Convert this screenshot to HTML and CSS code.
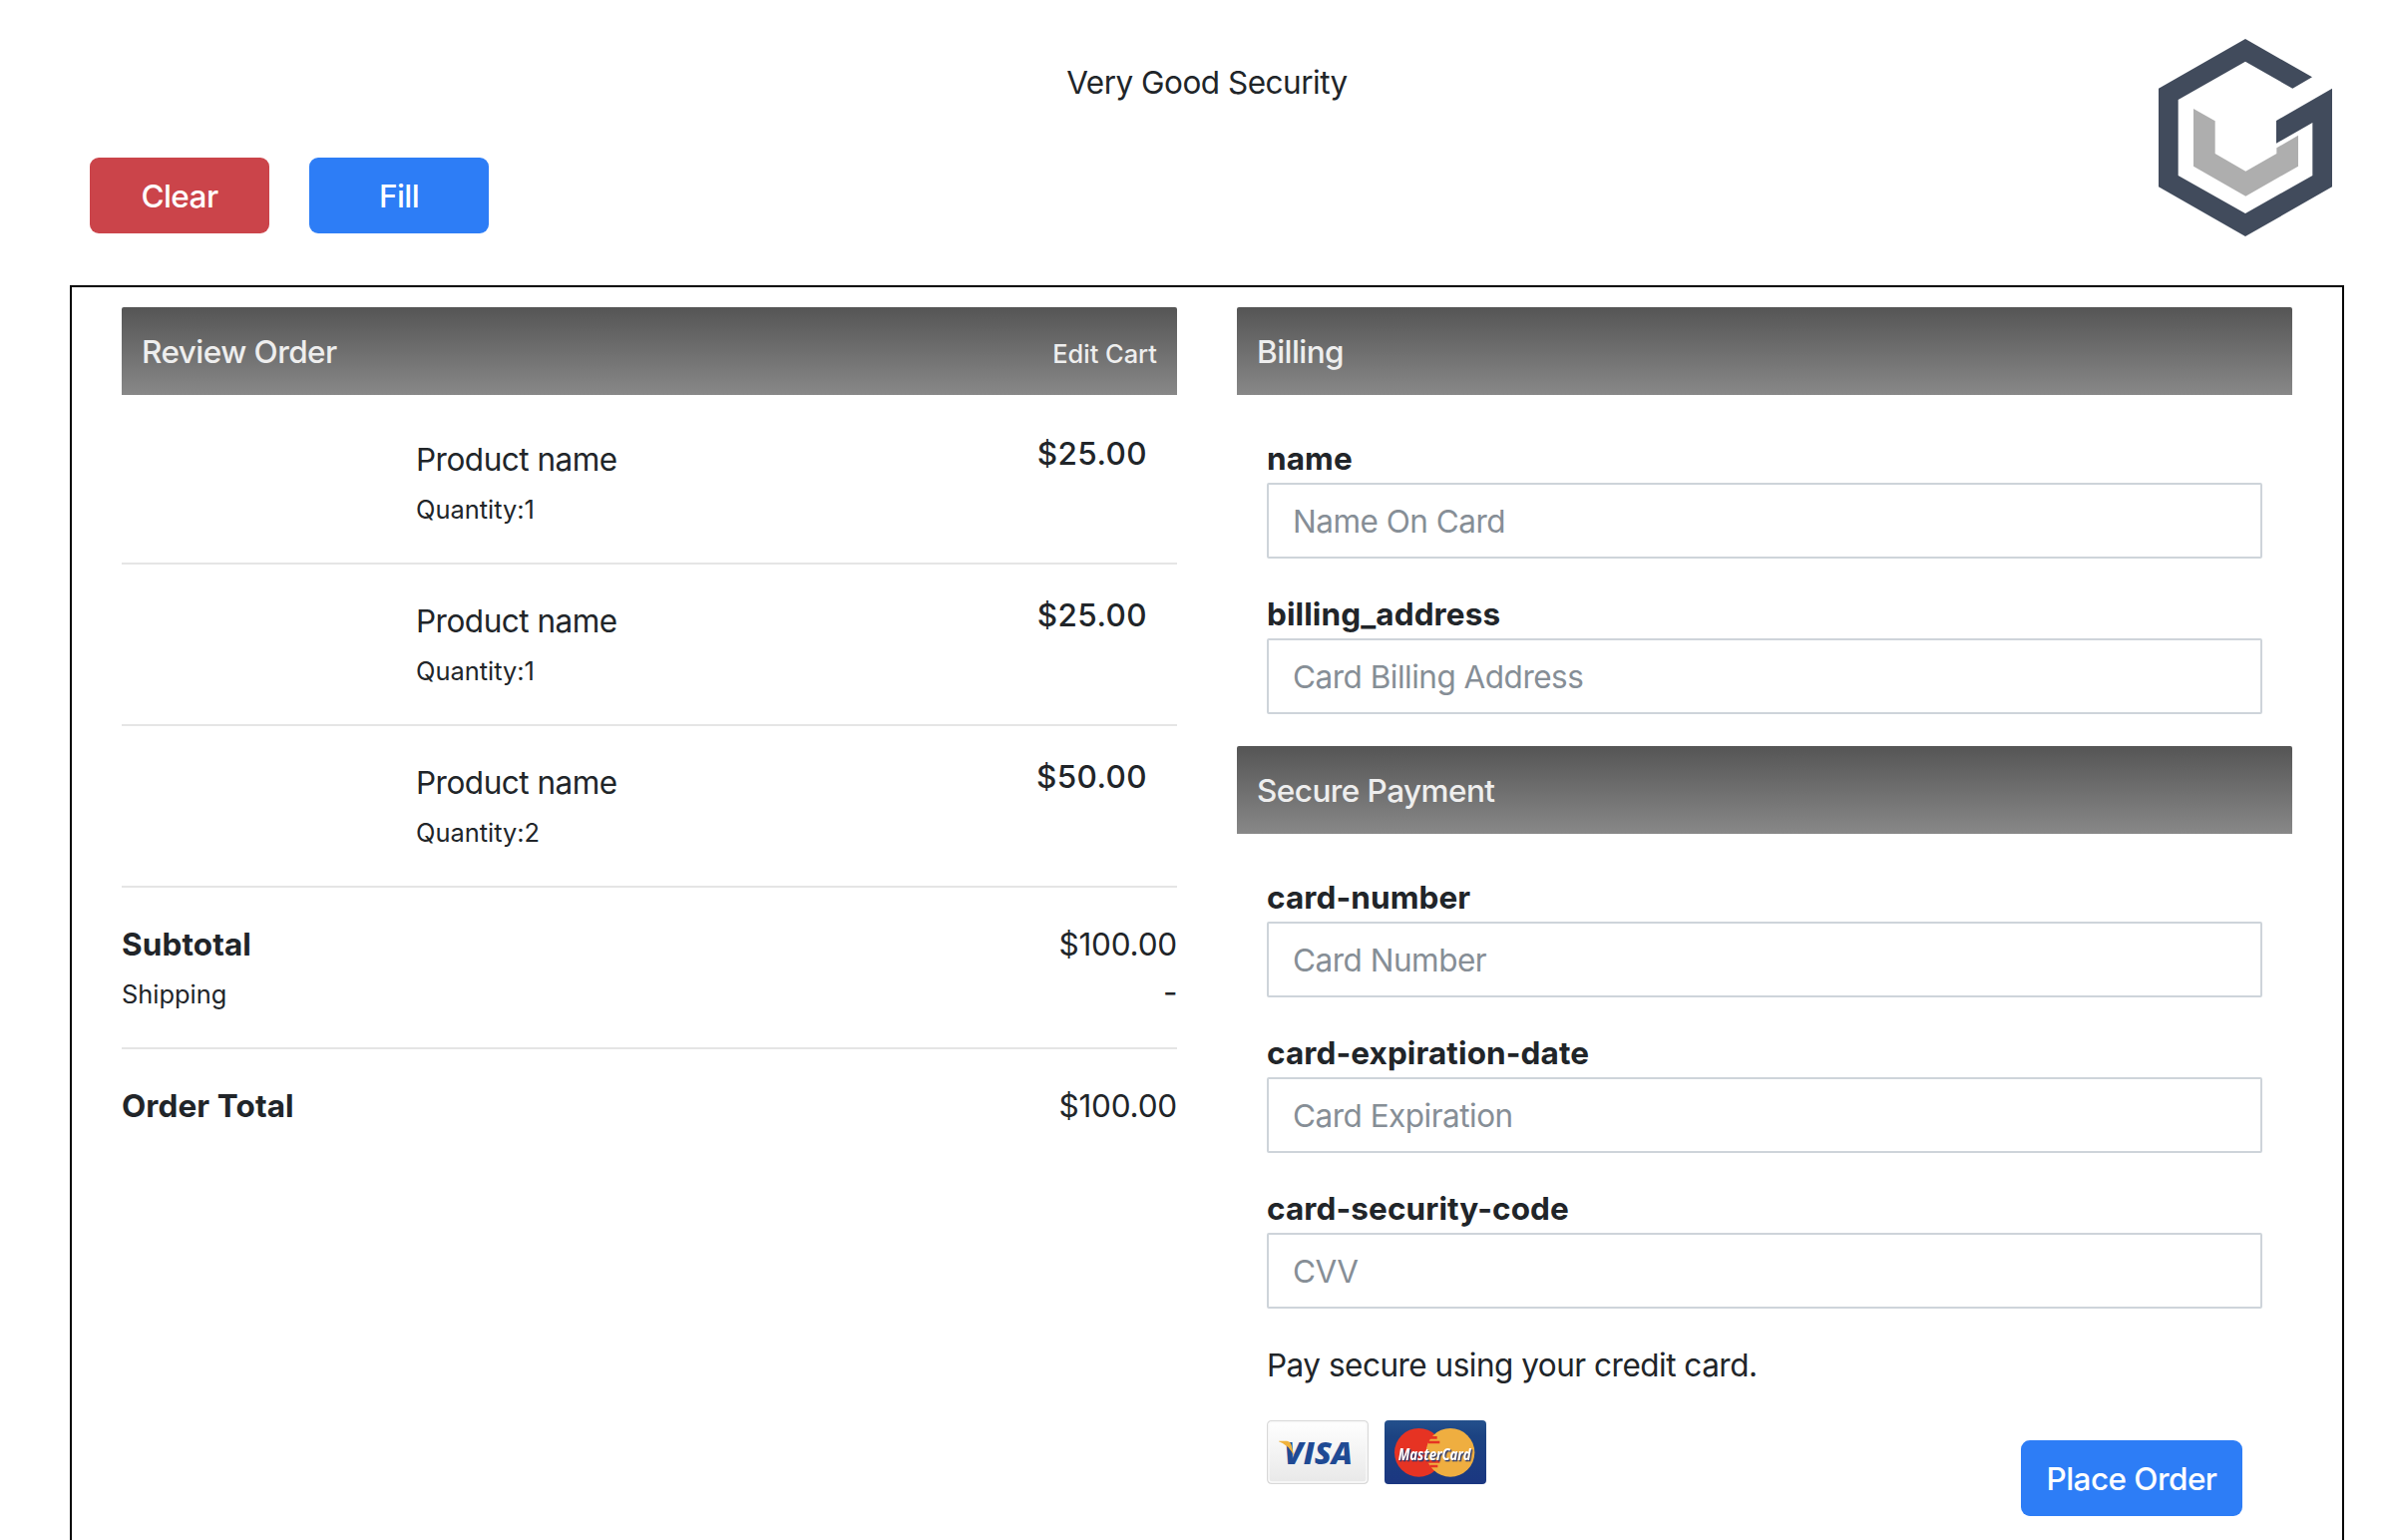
FILE: index.html
```html
<!DOCTYPE html>
<html lang="en">
<head>
<meta charset="utf-8">
<title>Very Good Security</title>
<link rel="stylesheet" href="styles.css">
</head>
<body>
<header class="top">
  <h1 class="title">Very Good Security</h1>
  <div class="actions">
    <button class="btn btn-danger">Clear</button>
    <button class="btn btn-primary">Fill</button>
  </div>
  <svg class="logo" viewBox="0 0 522 594" aria-hidden="true">
    <path fill="#414b5c" d="M261 0 462 115 403 149 261 68 59 183V411L261 525 463 411V252L354 314V246L522 149V445L261 594 0 445V149Z"/>
    <path fill="#aeaeae" d="M105 210 170 247V345L262 398 355 345V328L420 290V383L262 473 105 383Z"/>
  </svg>
</header>
<main class="checkout">
  <section class="column">
    <div class="panel-head"><span>Review Order</span><a class="edit">Edit Cart</a></div>
    <div class="order">
      <div class="item"><div class="info"><div>Product name</div><div><small>Quantity:1</small></div></div><h6 class="price">$25.00</h6></div>
      <div class="item"><div class="info"><div>Product name</div><div><small>Quantity:1</small></div></div><h6 class="price">$25.00</h6></div>
      <div class="item"><div class="info"><div>Product name</div><div><small>Quantity:2</small></div></div><h6 class="price">$50.00</h6></div>
      <div class="totals">
        <div class="line"><strong>Subtotal</strong><span class="sum">$100.00</span></div>
        <div class="line"><small>Shipping</small><span>-</span></div>
      </div>
      <div class="totals">
        <div class="line"><strong>Order Total</strong><span class="sum">$100.00</span></div>
      </div>
    </div>
  </section>
  <section class="column">
    <div class="panel-head">Billing</div>
    <form class="fields">
      <label class="field"><strong>name</strong><input class="input" placeholder="Name On Card"></label>
      <label class="field"><strong>billing_address</strong><input class="input" placeholder="Card Billing Address"></label>
    </form>
    <div class="panel-head">Secure Payment</div>
    <form class="fields">
      <label class="field"><strong>card-number</strong><input class="input" placeholder="Card Number"></label>
      <label class="field"><strong>card-expiration-date</strong><input class="input" placeholder="Card Expiration"></label>
      <label class="field"><strong>card-security-code</strong><input class="input" placeholder="CVV"></label>
      <div class="note">Pay secure using your credit card.</div>
      <div class="pay">
        <svg class="card" viewBox="0 0 306 192" role="img">
          <defs><linearGradient id="silver" x2="0" y2="1"><stop offset="0" stop-color="#fff"/><stop offset="1" stop-color="#e8e8e8"/></linearGradient></defs>
          <rect x="2" y="2" width="302" height="188" rx="12" fill="url(#silver)" stroke="#d8d8d8" stroke-width="4"/>
          <rect x="6" y="6" width="294" height="180" rx="9" fill="none" stroke="#fafafa" stroke-width="4"/>
          <text class="visa" x="52" y="132" textLength="206" lengthAdjust="spacingAndGlyphs">VISA</text>
          <path fill="#f0b23c" d="M36 62H60Q71 63 74 75L82 108Q66 74 36 64Z"/>
        </svg>
        <svg class="card" viewBox="0 0 306 192" role="img">
          <defs><linearGradient id="navy" x2="0" y2="1"><stop offset="0" stop-color="#24508c"/><stop offset=".25" stop-color="#1c4382"/><stop offset="1" stop-color="#1b3781"/></linearGradient></defs>
          <rect width="306" height="192" rx="12" fill="url(#navy)"/>
          <circle cx="103" cy="97" r="73" fill="#e63323"/>
          <circle cx="198" cy="97" r="73" fill="#efae40"/>
          <path stroke="#e63323" stroke-width="8" d="M136 52H158M132 66H166M130 124H166M136 138H160"/>
          <text class="mc" x="41" y="119" textLength="219" lengthAdjust="spacingAndGlyphs">MasterCard</text>
        </svg>
        <button type="button" class="btn btn-primary btn-order">Place Order</button>
      </div>
    </form>
  </section>
</main>
</body>
</html>
```
FILE: styles.css
```css
* { box-sizing: border-box; }
body {
  margin: 0;
  height: 1544px;
  overflow: hidden;
  background: #fff;
  color: #212529;
  font: 400 31.5px/48px Inter, "Liberation Sans", sans-serif;
  letter-spacing: -0.5px;
}
h1, h6 { margin: 0; font-weight: 400; font-size: inherit; }
small { font-size: 25.4px; line-height: 40px; letter-spacing: 0; }
strong { font-weight: 700; letter-spacing: 0.1px; }

.top {
  display: grid;
  grid-template-columns: 186px 1fr 186px;
  grid-template-rows: 119px 1fr;
  height: 286px;
  margin: 0 42px 0 70px;
  padding-top: 39px;
}
.title { grid-column: 2; margin-top: 20px; text-align: center; }
.actions { grid-column: 1 / 3; grid-row: 2; display: flex; gap: 40px; padding-left: 20px; }
.logo { grid-column: 3; grid-row: 1 / 3; width: 174px; height: 198px; }

.btn {
  height: 76px;
  width: 180px;
  padding: 2px 0 0;
  border: 0;
  border-radius: 9px;
  color: #fff;
  font: inherit;
  font-weight: 450;
  letter-spacing: -0.55px;
}
.btn-danger { background: #cb444a; }
.btn-primary { background: #2d7df6; }
.btn-order { width: 222px; margin: 20px 20px 0 auto; }

.checkout {
  display: grid;
  grid-template-columns: 1fr 1fr;
  gap: 60px;
  height: 1300px;
  margin: 0 42px 0 70px;
  padding: 20px 50px;
  border: 2px solid #000;
}
.panel-head {
  display: flex;
  justify-content: space-between;
  height: 88px;
  padding: 21px 20px 19px;
  border-radius: 2px 2px 0 0;
  background: linear-gradient(#555, #888);
  color: #eee;
  font-weight: 450;
  letter-spacing: -0.55px;
}
.edit { font-size: 25.4px; line-height: 52px; letter-spacing: 0; }

.order { padding-top: 40px; }
.item {
  display: flex;
  justify-content: space-between;
  height: 130px;
  margin-bottom: 32px;
  padding: 1px 30px 0 295px;
  border-bottom: 2px solid #e5e5e5;
}
.price { font-weight: 500; line-height: 35px; letter-spacing: 0.4px; }
.totals { padding-top: 1px; }
.totals + .totals { margin-top: 31px; padding-top: 33px; border-top: 2px solid #e5e5e5; }
.line { display: flex; justify-content: space-between; align-items: baseline; height: 48px; }
.sum { letter-spacing: -0.2px; }

.fields { padding: 40px 30px 0; }
.field { display: block; margin-bottom: 32px; }
.field strong { display: block; }
.input {
  display: block;
  width: 100%;
  height: 76px;
  padding: 0 24px;
  border: 2px solid #ced4da;
  border-radius: 2px;
  background: #fff;
  color: inherit;
  font: inherit;
  letter-spacing: inherit;
}
.input::placeholder { color: #868e96; opacity: 1; }
.note { margin-bottom: 31px; padding-top: 1px; }
.pay { display: flex; gap: 16px; align-items: flex-start; }
.card { width: 102px; height: 64px; }
.visa { font: italic 800 92px "Open Sans", sans-serif; fill: #1f4a94; letter-spacing: 0; }
.mc {
  font: italic 700 48px/1 "Open Sans", sans-serif;
  fill: #fff;
  letter-spacing: 0;
  filter: drop-shadow(4px 4px 1px #26366e);
}
```
